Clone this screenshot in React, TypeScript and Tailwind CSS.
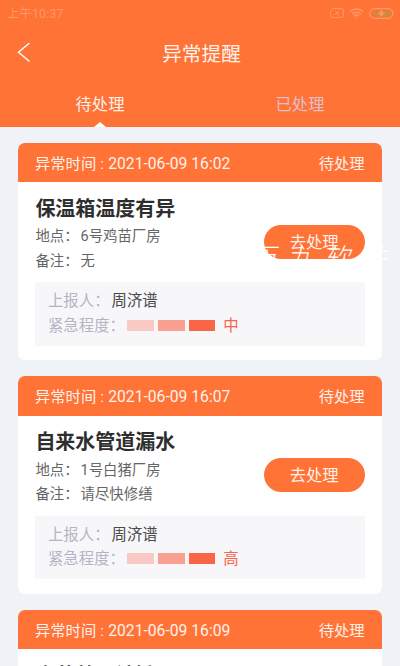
import clsx from 'clsx';

type Report = {
  time: string;
  title: string;
  place: string;
  remark: string;
  reporter: string;
  level: string;
};

const reports: Report[] = [
  {
    time: '2021-06-09 16:02',
    title: '保温箱温度有异',
    place: '6号鸡苗厂房',
    remark: '无',
    reporter: '周济谱',
    level: '中',
  },
  {
    time: '2021-06-09 16:07',
    title: '自来水管道漏水',
    place: '1号白猪厂房',
    remark: '请尽快修缮',
    reporter: '周济谱',
    level: '高',
  },
  {
    time: '2021-06-09 16:09',
    title: '窨井盖子被撬',
    place: '1号白猪厂房',
    remark: '无',
    reporter: '周济谱',
    level: '高',
  },
];

export default function App() {
  return (
    <div className="relative flex h-[666px] w-[400px] flex-col overflow-hidden bg-[#eff3f8] font-[Roboto,'Noto_Sans_CJK_SC',sans-serif]">
      <header className="h-[127px] shrink-0 bg-[#ff7337]">
        <StatusBar />
        <div className="grid h-[54px] grid-cols-[60px_1fr_60px] items-center">
          <svg className="ml-[17px] h-5 w-[14px]" viewBox="0 0 14 20" fill="none">
            <path d="M12.5 0 1.5 9.3l11 9.2" stroke="#fff" strokeWidth="1.5" />
          </svg>
          <h1 className="pt-[3px] pl-[3px] text-center text-[19.7px] leading-6 text-[#fff1eb]">
            异常提醒
          </h1>
        </div>
        <nav className="grid h-[47px] grid-cols-2 text-center text-[16.3px]">
          <Tab label="待处理" active />
          <Tab label="已处理" />
        </nav>
      </header>

      <main className="flex flex-col gap-[15.8px] px-[17.7px] pt-[15.8px]">
        {reports.map((r) => (
          <ReportCard key={r.time} report={r} />
        ))}
      </main>

      <div className="absolute top-[241px] left-[252px] flex w-[140px] -skew-x-12 gap-[11px] text-[26px] leading-[34px] font-light whitespace-nowrap text-white">
        <span>历</span>
        <span>九</span>
        <span>软</span>
        <span>件</span>
      </div>
    </div>
  );
}

function StatusBar() {
  return (
    <div className="flex h-[26px] items-center justify-between pr-[6px] pl-[7px] text-[#ff9768]">
      <span className="pt-px text-[12.3px] leading-4 tracking-[0.2px]">上午10:37</span>
      <div className="flex items-center gap-[5px]">
        <svg className="h-[10px] w-[14px]" viewBox="0 0 14 10" fill="none" stroke="currentColor">
          <path d="M3.5.6h8.4a1.4 1.4 0 0 1 1.4 1.4v6a1.4 1.4 0 0 1-1.4 1.4H2A1.4 1.4 0 0 1 .6 8V3.4z" />
          <path d="m5.3 3.3 3.5 3.5m0-3.5L5.3 6.8" />
        </svg>
        <svg className="h-[11px] w-[15px]" viewBox="0 0 15 11" fill="none" stroke="currentColor">
          <path
            d="M.6 3.8a9.8 9.8 0 0 1 13.8 0M2.9 6.1a6.5 6.5 0 0 1 9.2 0M5 8.2a3.6 3.6 0 0 1 5 0"
            strokeWidth="1.4"
          />
          <circle cx="7.5" cy="9.8" r="1" fill="currentColor" stroke="none" />
        </svg>
        <svg className="h-[11px] w-[25px]" viewBox="0 0 25 11">
          <rect
            x=".7"
            y=".7"
            width="23.2"
            height="9.6"
            rx="4.8"
            fill="none"
            stroke="currentColor"
            strokeWidth="1.2"
          />
          <path d="M5 2.2h15a2.3 2.3 0 0 1 2.3 2.3v2A2.3 2.3 0 0 1 20 8.8H5z" fill="#d0893a" />
          <path
            d="m14 .8-6 5.6h3.4L10.4 10.2l6.4-5.8h-3.4z"
            fill="currentColor"
            stroke="#ff7337"
            strokeWidth=".4"
          />
        </svg>
      </div>
    </div>
  );
}

function Tab({ label, active = false }: { label: string; active?: boolean }) {
  return (
    <div
      className={clsx(
        'flex flex-col items-center justify-between pt-[13px]',
        active ? 'text-[#fff1eb]' : 'text-[#e2bfcb]',
      )}
    >
      <span className="leading-6">{label}</span>
      {active && (
        <svg className="h-[5px] w-3" viewBox="0 0 12 5">
          <path d="M0 5 6 0l6 5z" fill="#fff" />
        </svg>
      )}
    </div>
  );
}

function ReportCard({ report }: { report: Report }) {
  return (
    <section className="h-[217.7px] shrink-0 overflow-hidden rounded-[7px] bg-white">
      <div className="flex h-[39.3px] items-center justify-between bg-[#ff7337] pt-[3px] pr-[17.7px] pl-[17.3px] text-[15.3px] leading-5 text-[#fff1eb]">
        <div className="flex">
          <span>异常时间</span>
          <span className="w-[12px] text-center">:</span>
          <span className="text-[15.7px]">{report.time}</span>
        </div>
        <span>待处理</span>
      </div>

      <div className="px-[17.7px]">
        <div className="flex h-[100px] justify-between">
          <div className="pt-[14.6px] text-[14.4px] leading-[24.6px] text-[#666]">
            <h2 className="mb-[4.4px] text-[20px] leading-[24px] font-bold text-[#2e2e2e]">
              {report.title}
            </h2>
            <p>
              地点：<span className="ml-[2px]">{report.place}</span>
            </p>
            <p>
              备注：<span className="ml-[2px]">{report.remark}</span>
            </p>
          </div>
          <button className="mt-[42.5px] h-[34px] w-[101px] rounded-full bg-[#ff7337] pt-[3px] text-[16.3px] text-[#fff1eb]">
            去处理
          </button>
        </div>

        <div className="h-[63.7px] bg-[#f7f7fa] px-[12.6px] pt-[7px] text-[15.4px] leading-[24.6px] text-[#b5b4c4]">
          <p>
            上报人：<span className="ml-[2px] text-[#4a4a4a]">{report.reporter}</span>
          </p>
          <div className="flex items-center">
            <span className="w-[79px]">紧急程度：</span>
            <div className="-mt-px flex gap-1">
              <i className="h-[11px] w-[26.8px] bg-[#fbc9c4]" />
              <i className="h-[11px] w-[26.8px] bg-[#f9a091]" />
              <i className="h-[11px] w-[26.8px] bg-[#fb6547]" />
            </div>
            <span className="ml-2 text-[#fb6547]">{report.level}</span>
          </div>
        </div>
      </div>
    </section>
  );
}
